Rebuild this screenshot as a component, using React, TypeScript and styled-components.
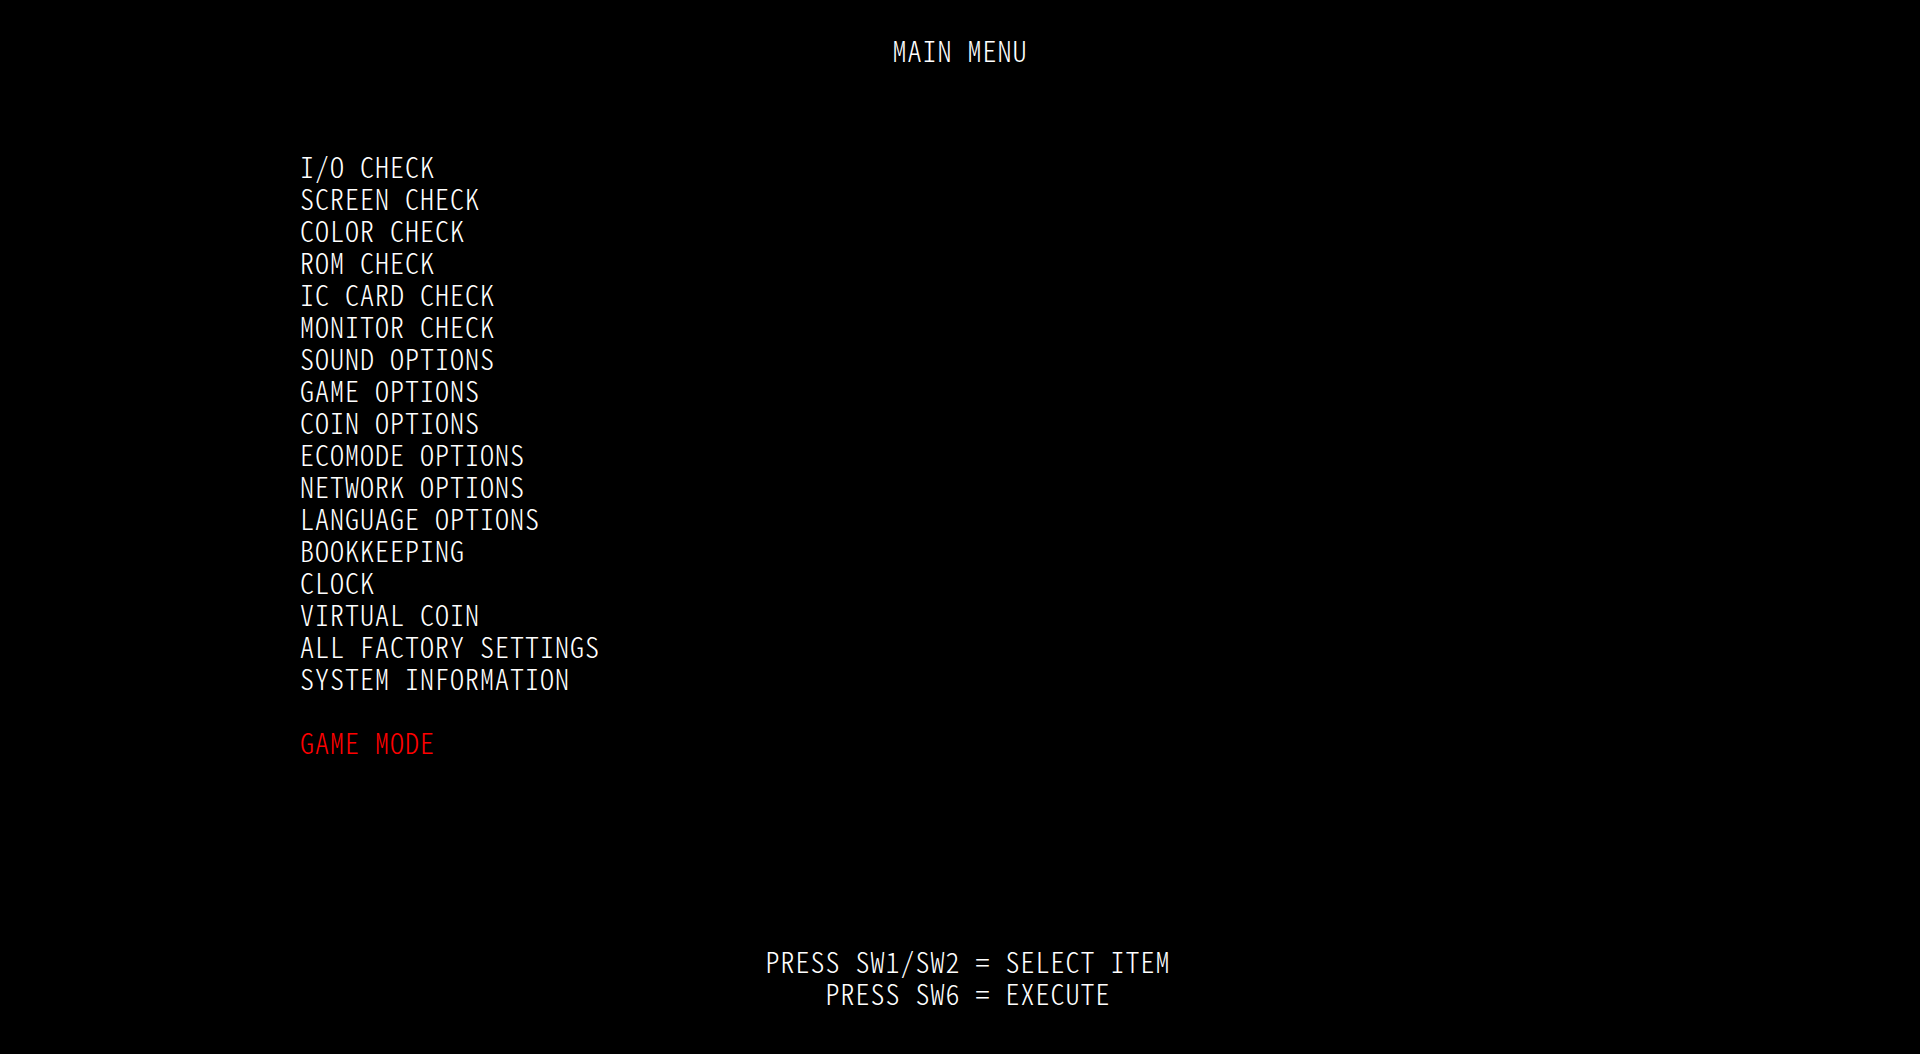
import React from "react";
import styled, { createGlobalStyle } from "styled-components";

const Global = createGlobalStyle`
  html, body { margin: 0; padding: 0; background: #000; }
  body { width: 1920px; height: 1054px; overflow: hidden; }
`;

const Screen = styled.div`
  width: 1920px;
  height: 1054px;
  background: #000;
  color: #fff;
  font-family: "Noto Sans CJK JP", "Noto Sans Mono CJK JP", monospace;
  font-feature-settings: "hwid" 1;
  font-weight: 300;
  font-size: 28px;
  line-height: 32px;
  letter-spacing: 1px;
  display: flex;
  flex-direction: column;
  padding-top: 34px;
  box-sizing: border-box;
  white-space: pre;
`;

const Title = styled.div`
  text-align: center;
`;

const Menu = styled.ul`
  list-style: none;
  margin: 84px 0 0 0;
  padding: 0 0 0 300px;
  display: flex;
  flex-direction: column;
`;

const Item = styled.li<{ $active?: boolean; $gap?: boolean }>`
  height: 32px;
  color: ${(p) => (p.$active ? "#ff0000" : "#fff")};
  margin-top: ${(p) => (p.$gap ? "32px" : "0")};
`;

const Footer = styled.div`
  margin-top: 187px;
  padding-left: 16px;
  display: flex;
  flex-direction: column;
  align-items: center;
`;

const FooterLine = styled.div``;

const items = [
  "I/O CHECK",
  "SCREEN CHECK",
  "COLOR CHECK",
  "ROM CHECK",
  "IC CARD CHECK",
  "MONITOR CHECK",
  "SOUND OPTIONS",
  "GAME OPTIONS",
  "COIN OPTIONS",
  "ECOMODE OPTIONS",
  "NETWORK OPTIONS",
  "LANGUAGE OPTIONS",
  "BOOKKEEPING",
  "CLOCK",
  "VIRTUAL COIN",
  "ALL FACTORY SETTINGS",
  "SYSTEM INFORMATION",
];

export default function App() {
  return (
    <>
      <Global />
      <Screen>
        <Title>MAIN MENU</Title>
        <Menu>
          {items.map((t) => (
            <Item key={t}>{t}</Item>
          ))}
          <Item $active $gap>GAME MODE</Item>
        </Menu>
        <Footer>
          <FooterLine>PRESS SW1/SW2 = SELECT ITEM</FooterLine>
          <FooterLine>PRESS SW6 = EXECUTE</FooterLine>
        </Footer>
      </Screen>
    </>
  );
}
